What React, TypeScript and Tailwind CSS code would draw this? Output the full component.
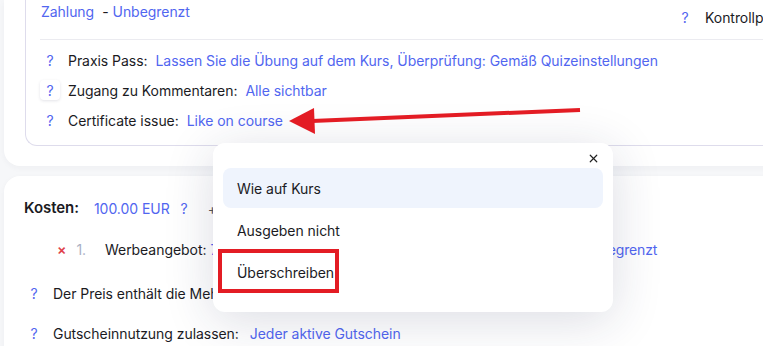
import React from 'react'
import { X } from 'lucide-react'

const blue = 'text-[#5166f0]'

const settings = [
  { label: 'Praxis Pass:', value: 'Lassen Sie die Übung auf dem Kurs, Überprüfung: Gemäß Quizeinstellungen' },
  { label: 'Zugang zu Kommentaren:', value: 'Alle sichtbar', focused: true },
  { label: 'Certificate issue:', value: 'Like on course' },
]

const options = ['Wie auf Kurs', 'Ausgeben nicht', 'Überschreiben']

const Help = ({ focused }: { focused?: boolean }) => (
  <span
    className={
      'flex h-[20px] w-[20px] items-center justify-center rounded-[4px] text-[14px] ' +
      blue +
      (focused ? ' bg-white shadow-[0_1px_3px_rgba(60,60,90,0.14)]' : '')
    }
  >
    ?
  </span>
)

const App = () => {
  return (
    <div className="relative h-[346px] w-[763px] overflow-hidden bg-[#f6f7f9] font-['Inter',sans-serif] text-[14px] tracking-[-0.05px] text-[#1b1b1f]">
      {/* top card */}
      <div className="ml-[4px] w-[820px] rounded-b-[16px] bg-white pb-[20px] pl-[21px] shadow-[0_2px_6px_rgba(40,40,80,0.04)]">
        <div className="rounded-bl-[12px] border-b border-l border-[#dedcec] pb-[10px]">
          <div className="flex h-[39px] items-start justify-between pl-[15px] pr-[20px]">
            <div className="flex pt-[2px] leading-[20px]">
              <span className={blue}>Zahlung</span>
              <span className="ml-[8px]">-</span>
              <span className={'ml-[4px] ' + blue}>Unbegrenzt</span>
            </div>
            <div className="flex items-center gap-[10px] pt-[8px] leading-[20px]">
              <Help />
              <span>Kontrollpunkte:</span>
            </div>
          </div>
          <div className="ml-[14px] border-t border-[#ebebf0] pt-[5px]">
            {settings.map((s, i) => (
              <div key={i} className="flex h-[30px] items-center">
                <Help focused={s.focused} />
                <span className="ml-[8px]">{s.label}</span>
                <span className={'ml-[8px] ' + blue}>{s.value}</span>
              </div>
            ))}
          </div>
        </div>
      </div>

      {/* second card */}
      <div className="ml-[4px] mt-[10px] h-[200px] w-[820px] rounded-t-[16px] bg-white pl-[20px] pt-[20px] shadow-[0_2px_6px_rgba(40,40,80,0.04)]">
        <div className="flex h-[24px] items-center">
          <span className="text-[15px] font-semibold">Kosten:</span>
          <span className={'ml-[15px] ' + blue}>100.00 EUR</span>
          <span className={'ml-[11px] ' + blue}>?</span>
          <span className="ml-[20px] text-[#555]">+</span>
        </div>
        <div className="mt-[17px] flex h-[24px] items-center pl-[33px]">
          <span className="text-[14px] font-semibold text-[#e0424a]">×</span>
          <span className="ml-[10px] text-[#a9b0c4]">1.</span>
          <span className="ml-[19px]">Werbeangebot:</span>
          <span className={'ml-[4px] tracking-[-0.15px] ' + blue}>77.00 EUR, Gültig bis: 31.12.2024, Anzahl der Nutzungen: Unbegrenzt</span>
        </div>
        <div className="mt-[20px] flex h-[24px] items-center">
          <Help />
          <span className="ml-[9px]">Der Preis enthält die Mehrwertsteuer:</span>
          <span className={'ml-[8px] ' + blue}>Ja</span>
        </div>
        <div className="mt-[16px] flex h-[24px] items-center">
          <Help />
          <span className="ml-[9px]">Gutscheinnutzung zulassen:</span>
          <span className={'ml-[11px] ' + blue}>Jeder aktive Gutschein</span>
        </div>
      </div>

      {/* dropdown */}
      <div className="absolute left-[213px] top-[143px] h-[169px] w-[400px] rounded-[12px] bg-white px-[10px] pt-[25px] shadow-[0_8px_50px_rgba(30,40,80,0.16)]">
        <button className="absolute right-[13px] top-[8px] flex h-[14px] w-[14px] items-center justify-center text-[#222]">
          <X className="h-[13px] w-[13px]" strokeWidth={2.2} />
        </button>
        <div className="flex flex-col gap-[2px]">
          {options.map((o, i) => (
            <div
              key={o}
              className={'flex h-[40px] items-center rounded-[8px] pl-[14px] ' + (i === 0 ? 'bg-[#eff4fd]' : '')}
            >
              {o}
            </div>
          ))}
        </div>
      </div>

      {/* annotations */}
      <div className="absolute left-[218px] top-[249px] h-[44px] w-[121px] border-[4px] border-[#e31c24]" />
      <svg className="absolute left-0 top-0" width="763" height="346">
        <line x1="312" y1="121" x2="580" y2="110" stroke="#e31c24" strokeWidth="4" />
        <polygon points="289,121 314,108 315,134" fill="#e31c24" />
      </svg>
    </div>
  )
}

export default App
